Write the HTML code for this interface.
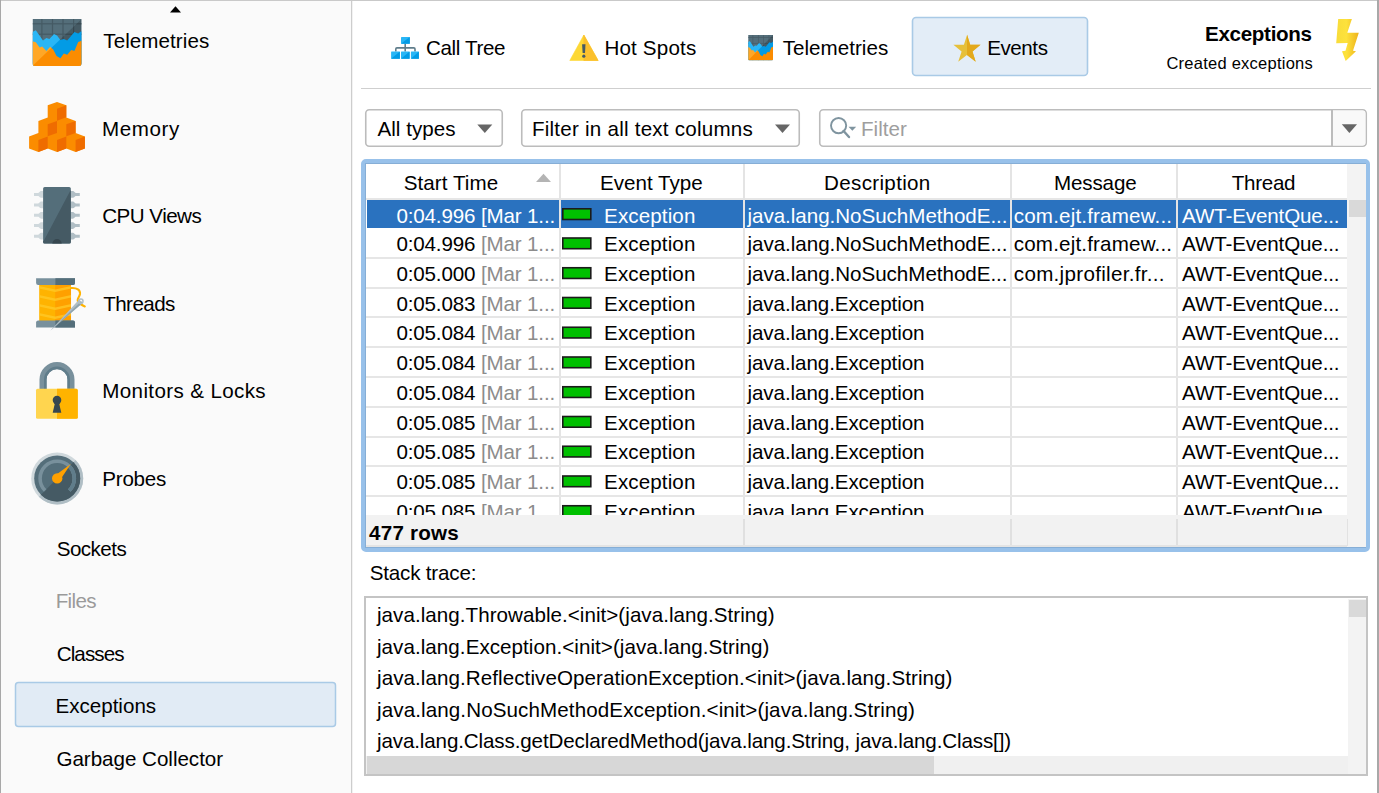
<!DOCTYPE html>
<html><head><meta charset="utf-8"><style>
html,body{margin:0;padding:0;width:1379px;height:793px;overflow:hidden;background:#fff}
.t{position:absolute;font-family:"Liberation Sans",sans-serif;line-height:1;white-space:nowrap}
svg{position:absolute;left:0;top:0}
</style></head><body>
<svg width="1379" height="793" viewBox="0 0 1379 793"><rect x="0" y="0" width="1379" height="793" fill="#fff" /><rect x="0" y="0" width="352" height="793" fill="#fafafa" /><rect x="351" y="0" width="1" height="793" fill="#cdcdcd" /><rect x="352" y="0" width="1" height="793" fill="#f2f2f2" /><rect x="0" y="0" width="1379" height="1" fill="#c9c9c9" /><rect x="0" y="0" width="1" height="793" fill="#a8a8a8" /><rect x="1377" y="0" width="2" height="793" fill="#a8a8a8" /><path d="M175.5 6.2 L181 12.6 L170 12.6 Z" fill="#000"/><rect x="15.5" y="682.5" width="320" height="44" rx="3" fill="#e1ebf5" stroke="#a9cae6" stroke-width="1.5"/><rect x="912.5" y="17.5" width="175" height="58" rx="3.5" fill="#e3edf7" stroke="#a9cae6" stroke-width="1.6"/><rect x="361" y="88" width="1010" height="1" fill="#cfcfcf" /><rect x="365.75" y="109.75" width="136.5" height="36.5" rx="3.5" fill="#fff" stroke="#bcbcbc" stroke-width="1.6"/><path d="M477.3 124.4 L492.3 124.4 L484.8 133 Z" fill="#666"/><rect x="521.75" y="109.75" width="277.5" height="36.5" rx="3.5" fill="#fff" stroke="#bcbcbc" stroke-width="1.6"/><path d="M775 124.4 L790 124.4 L782.5 133 Z" fill="#666"/><rect x="819.75" y="109.75" width="546.5" height="36.5" rx="3.5" fill="#fff" stroke="#bcbcbc" stroke-width="1.6"/><path d="M1332.5 110.6 H1362.5 Q1365.4 110.6 1365.4 113.5 V142.5 Q1365.4 145.4 1362.5 145.4 H1332.5 Z" fill="#f9f9f9"/><rect x="1331" y="110" width="2" height="36" fill="#bcbcbc" /><path d="M1341.8 124.2 L1357 124.2 L1349.4 133 Z" fill="#666"/><circle cx="838.6" cy="125.6" r="7.6" fill="none" stroke="#7f949f" stroke-width="1.9"/><path d="M843.6 131 L849 137" stroke="#7f949f" stroke-width="2.4" stroke-linecap="round"/><path d="M848.5 126.8 L856.2 126.8 L852.35 130.8 Z" fill="#7f949f"/><rect x="363" y="161" width="1005" height="389" rx="3" fill="none" stroke="#98c1ea" stroke-width="4"/><rect x="365.5" y="163.5" width="1000" height="384" fill="#fff" stroke="#86aed6" stroke-width="1"/><rect x="366" y="198" width="981" height="2" fill="#e6e6e6" /><rect x="559" y="164" width="2" height="351" fill="#e4e4e4" /><rect x="743" y="164" width="2" height="351" fill="#e4e4e4" /><rect x="1010" y="164" width="2" height="351" fill="#e4e4e4" /><rect x="1176" y="164" width="2" height="351" fill="#e4e4e4" /><rect x="1347" y="164" width="19" height="383" fill="#f3f3f3" /><rect x="1349" y="200" width="17" height="17" fill="#d9d9d9" /><rect x="367" y="200" width="192" height="28" fill="#2a72bf" /><rect x="561" y="200" width="182" height="28" fill="#2a72bf" /><rect x="745" y="200" width="265" height="28" fill="#2a72bf" /><rect x="1012" y="200" width="164" height="28" fill="#2a72bf" /><rect x="1178" y="200" width="169" height="28" fill="#2a72bf" /><rect x="366" y="257" width="981" height="2" fill="#e6e6e6" /><rect x="366" y="287" width="981" height="2" fill="#e6e6e6" /><rect x="366" y="316" width="981" height="2" fill="#e6e6e6" /><rect x="366" y="346" width="981" height="2" fill="#e6e6e6" /><rect x="366" y="376" width="981" height="2" fill="#e6e6e6" /><rect x="366" y="406" width="981" height="2" fill="#e6e6e6" /><rect x="366" y="436" width="981" height="2" fill="#e6e6e6" /><rect x="366" y="465" width="981" height="2" fill="#e6e6e6" /><rect x="366" y="495" width="981" height="2" fill="#e6e6e6" /><rect x="366" y="525" width="981" height="2" fill="#e6e6e6" /><rect x="562.8" y="208.80" width="28" height="10.7" fill="#00c000" stroke="#1b1b1b" stroke-width="1.6"/><rect x="562.8" y="238.00" width="28" height="10.7" fill="#00c000" stroke="#1b1b1b" stroke-width="1.6"/><rect x="562.8" y="267.75" width="28" height="10.7" fill="#00c000" stroke="#1b1b1b" stroke-width="1.6"/><rect x="562.8" y="297.50" width="28" height="10.7" fill="#00c000" stroke="#1b1b1b" stroke-width="1.6"/><rect x="562.8" y="327.25" width="28" height="10.7" fill="#00c000" stroke="#1b1b1b" stroke-width="1.6"/><rect x="562.8" y="357.00" width="28" height="10.7" fill="#00c000" stroke="#1b1b1b" stroke-width="1.6"/><rect x="562.8" y="386.75" width="28" height="10.7" fill="#00c000" stroke="#1b1b1b" stroke-width="1.6"/><rect x="562.8" y="416.50" width="28" height="10.7" fill="#00c000" stroke="#1b1b1b" stroke-width="1.6"/><rect x="562.8" y="446.25" width="28" height="10.7" fill="#00c000" stroke="#1b1b1b" stroke-width="1.6"/><rect x="562.8" y="476.00" width="28" height="10.7" fill="#00c000" stroke="#1b1b1b" stroke-width="1.6"/><rect x="562.8" y="505.75" width="28" height="10.7" fill="#00c000" stroke="#1b1b1b" stroke-width="1.6"/><path d="M543.5 173.8 L551 182 L536 182 Z" fill="#b4b4b4"/><rect x="366" y="515" width="981" height="32" fill="#f2f2f2" /><rect x="743" y="519" width="2" height="27" fill="#e0e0e0" /><rect x="1010" y="519" width="2" height="27" fill="#e0e0e0" /><rect x="1176" y="519" width="2" height="27" fill="#e0e0e0" /><rect x="366" y="545" width="981" height="2" fill="#e4e4e4" /><rect x="1347" y="515" width="19" height="32" fill="#f3f3f3" /><rect x="1347" y="519" width="1" height="27" fill="#e2e2e2" /><rect x="365" y="597" width="1002" height="178" fill="#fff" stroke="#c4c4c4" stroke-width="2"/><rect x="1348" y="599" width="18" height="175" fill="#f3f3f3" /><rect x="1349" y="600" width="17" height="17" fill="#d9d9d9" /><rect x="366" y="756" width="982" height="18" fill="#f0f0f0" /><rect x="367" y="756" width="567" height="18" fill="#d7d7d7" /><g transform="translate(32.4,19) scale(1,1)"><clipPath id="tca"><path d="M0 0H49.2V44Q49.2 47 46.2 47H3Q0 47 0 44Z"/></clipPath><mask id="tda" maskUnits="userSpaceOnUse" x="-5" y="-5" width="60" height="60"><polygon points="0,47 49.2,0 49.2,47" fill="#fff"/></mask><g clip-path="url(#tca)"><rect width="49.2" height="47" fill="#546e7a"/><rect x="8.9" y="0" width="1.2" height="47" fill="#455a64"/><rect x="19.5" y="0" width="1.2" height="47" fill="#455a64"/><rect x="30.0" y="0" width="1.2" height="47" fill="#455a64"/><rect x="40.6" y="0" width="1.2" height="47" fill="#455a64"/><rect x="0" y="4.2" width="49.2" height="1.2" fill="#455a64"/><rect x="0" y="14.6" width="49.2" height="1.2" fill="#455a64"/><polygon points="0.00,13.10 3.40,11.20 10.60,21.40 14.00,19.10 17.00,19.90 21.60,14.90 24.60,16.40 28.00,20.90 31.40,20.10 34.80,21.40 42.00,13.10 45.80,14.60 49.20,11.90 49.20,47.00 0.00,47.00" fill="#29b6f6"/><polygon points="0.00,22.20 3.40,23.30 7.20,28.60 9.80,27.50 14.00,32.00 17.80,27.80 20.80,30.50 24.20,36.90 28.00,39.20 31.40,34.60 34.80,35.80 38.90,30.90 42.00,32.00 45.80,22.90 49.20,21.80 49.20,47.00 0.00,47.00" fill="#ffa726"/><g mask="url(#tda)"><rect width="49.2" height="47" fill="#455a64"/><rect x="8.9" y="0" width="1.2" height="47" fill="#37474f"/><rect x="19.5" y="0" width="1.2" height="47" fill="#37474f"/><rect x="30.0" y="0" width="1.2" height="47" fill="#37474f"/><rect x="40.6" y="0" width="1.2" height="47" fill="#37474f"/><rect x="0" y="4.2" width="49.2" height="1.2" fill="#37474f"/><rect x="0" y="14.6" width="49.2" height="1.2" fill="#37474f"/><polygon points="0.00,13.10 3.40,11.20 10.60,21.40 14.00,19.10 17.00,19.90 21.60,14.90 24.60,16.40 28.00,20.90 31.40,20.10 34.80,21.40 42.00,13.10 45.80,14.60 49.20,11.90 49.20,47.00 0.00,47.00" fill="#039be5"/><polygon points="0.00,22.20 3.40,23.30 7.20,28.60 9.80,27.50 14.00,32.00 17.80,27.80 20.80,30.50 24.20,36.90 28.00,39.20 31.40,34.60 34.80,35.80 38.90,30.90 42.00,32.00 45.80,22.90 49.20,21.80 49.20,47.00 0.00,47.00" fill="#fb8c00"/></g></g></g><g transform="translate(29.1,101.9)"><polygon points="0.00,34.60 9.30,31.10 9.30,19.00 18.60,15.50 18.60,3.40 27.90,0.00 37.20,3.40 37.20,15.50 46.50,19.00 46.50,31.10 55.80,34.60 55.80,46.60 46.50,50.00 37.20,46.60 27.90,50.00 18.60,46.60 9.30,50.00 0.00,46.60" fill="#fb8c00"/><polygon points="27.90,6.80 37.20,3.40 37.20,15.40 27.90,18.80" fill="#ef6c00"/><polygon points="18.60,22.40 27.90,19.00 27.90,31.00 18.60,34.40" fill="#ef6c00"/><polygon points="37.20,22.40 46.50,19.00 46.50,31.00 37.20,34.40" fill="#ef6c00"/><polygon points="9.30,38.00 18.60,34.60 18.60,46.60 9.30,50.00" fill="#ef6c00"/><polygon points="27.90,38.00 37.20,34.60 37.20,46.60 27.90,50.00" fill="#ef6c00"/><polygon points="46.50,38.00 55.80,34.60 55.80,46.60 46.50,50.00" fill="#ef6c00"/></g><path d="M43.5 191.0 H41.2 C39.6 191.0 39.4 192.9 38.2 192.9 H34 V195.9 H38.2 C39.4 195.9 39.6 197.8 41.2 197.8 H43.5 Z" fill="#cfd8dc"/><path d="M70.5 191.0 H72.8 C74.4 191.0 74.6 192.9 75.8 192.9 H79.8 V195.9 H75.8 C74.6 195.9 74.4 197.8 72.8 197.8 H70.5 Z" fill="#b0bec5"/><path d="M43.5 201.5 H41.2 C39.6 201.5 39.4 203.4 38.2 203.4 H34 V206.4 H38.2 C39.4 206.4 39.6 208.3 41.2 208.3 H43.5 Z" fill="#cfd8dc"/><path d="M70.5 201.5 H72.8 C74.4 201.5 74.6 203.4 75.8 203.4 H79.8 V206.4 H75.8 C74.6 206.4 74.4 208.3 72.8 208.3 H70.5 Z" fill="#b0bec5"/><path d="M43.5 211.9 H41.2 C39.6 211.9 39.4 213.8 38.2 213.8 H34 V216.8 H38.2 C39.4 216.8 39.6 218.70000000000002 41.2 218.70000000000002 H43.5 Z" fill="#cfd8dc"/><path d="M70.5 211.9 H72.8 C74.4 211.9 74.6 213.8 75.8 213.8 H79.8 V216.8 H75.8 C74.6 216.8 74.4 218.70000000000002 72.8 218.70000000000002 H70.5 Z" fill="#b0bec5"/><path d="M43.5 222.2 H41.2 C39.6 222.2 39.4 224.1 38.2 224.1 H34 V227.1 H38.2 C39.4 227.1 39.6 229.0 41.2 229.0 H43.5 Z" fill="#cfd8dc"/><path d="M70.5 222.2 H72.8 C74.4 222.2 74.6 224.1 75.8 224.1 H79.8 V227.1 H75.8 C74.6 227.1 74.4 229.0 72.8 229.0 H70.5 Z" fill="#b0bec5"/><path d="M43.5 232.79999999999998 H41.2 C39.6 232.79999999999998 39.4 234.7 38.2 234.7 H34 V237.7 H38.2 C39.4 237.7 39.6 239.6 41.2 239.6 H43.5 Z" fill="#cfd8dc"/><path d="M70.5 232.79999999999998 H72.8 C74.4 232.79999999999998 74.6 234.7 75.8 234.7 H79.8 V237.7 H75.8 C74.6 237.7 74.4 239.6 72.8 239.6 H70.5 Z" fill="#b0bec5"/><clipPath id="cpuc"><rect x="43.1" y="187" width="27.7" height="56.6" rx="1.6"/></clipPath><g clip-path="url(#cpuc)"><rect x="43" y="187" width="29" height="57" fill="#546e7a"/><polygon points="43.7,241 70.8,189.7 72,189.7 72,245 43,245 43,241" fill="#455a64"/><circle cx="57" cy="243.8" r="4.7" fill="#37474f"/></g><clipPath id="spb"><rect x="39.2" y="284" width="31.9" height="37"/></clipPath><g clip-path="url(#spb)"><rect x="39" y="284" width="17" height="37" fill="#ffb300"/><rect x="55.2" y="284" width="16" height="37" fill="#ffa000"/><path d="M39 286 L55.2 289.5 L71.2 286 L71.2 288.6 L55.2 292.1 L39 288.6 Z" fill="#ffca28" opacity="0.75"/><path d="M39 295 L55.2 298.5 L71.2 295 L71.2 297.6 L55.2 301.1 L39 297.6 Z" fill="#ffca28" opacity="0.75"/><path d="M39 304 L55.2 307.5 L71.2 304 L71.2 306.6 L55.2 310.1 L39 306.6 Z" fill="#ffca28" opacity="0.75"/><path d="M39 313 L55.2 316.5 L71.2 313 L71.2 315.6 L55.2 319.1 L39 315.6 Z" fill="#ffca28" opacity="0.75"/></g><path d="M36.1 278.3 H75 V283 Q75 284.9 73 284.9 H38.1 Q36.1 284.9 36.1 283 Z" fill="#78909c"/><path d="M55.4 278.3 H75 V283 Q75 284.9 73 284.9 H55.4 Z" fill="#546e7a"/><path d="M38.1 320.5 H73 Q75 320.5 75 322.4 V327.4 H36.1 V322.4 Q36.1 320.5 38.1 320.5 Z" fill="#78909c"/><path d="M55.4 320.5 H73 Q75 320.5 75 322.4 V327.4 H55.4 Z" fill="#546e7a"/><path d="M71 288 C77 287.5 80.5 290 80 294 C79.5 297 76.5 299 78 301.5 C79.5 304 82.5 305.5 84.8 306.4" fill="none" stroke="#ffb300" stroke-width="2.1" stroke-linecap="round"/><path d="M50.2 330.8 L79.2 299.6 L82.6 302.9 Z" fill="#b0bec5"/><path d="M50.2 330.8 L82.6 302.9 L81.2 301.3 Z" fill="#90a4ae"/><circle cx="80.9" cy="301.2" r="2.1" fill="none" stroke="#b0bec5" stroke-width="1.5"/><path d="M43 389 V379.6 A14 14 0 0 1 71 379.6 V389" fill="none" stroke="#78909c" stroke-width="7"/><path d="M45.3 389 V379.6 A11.7 11.7 0 0 1 68.7 379.6 V389" fill="none" stroke="#607d8b" stroke-width="2.6"/><rect x="36" y="388.8" width="41.8" height="30" rx="1.6" fill="#ffd54f"/><path d="M57 388.8 H76.2 Q77.8 388.8 77.8 390.4 V417.2 Q77.8 418.8 76.2 418.8 H57 Z" fill="#ffb300"/><circle cx="57" cy="400.1" r="4.3" fill="#37474f"/><path d="M55.3 401.4 H58.7 L61.3 412.7 H52.7 Z" fill="#37474f"/><clipPath id="prd"><polygon points="17.200000000000003,518.4 97.2,438.4 97.2,518.4"/></clipPath><circle cx="57.2" cy="478.4" r="26" fill="#cfd8dc"/><circle cx="57.2" cy="478.4" r="26" fill="#b0bec5" clip-path="url(#prd)"/><circle cx="57.2" cy="478.4" r="23" fill="#546e7a"/><circle cx="57.2" cy="478.4" r="23" fill="#455a64" clip-path="url(#prd)"/><path d="M45.11 490.49 A17.1 17.1 0 1 1 69.29 490.49" fill="none" stroke="#78909c" stroke-width="3.6"/><path d="M45.11 490.49 A17.1 17.1 0 1 1 69.29 490.49" fill="none" stroke="#607d8b" stroke-width="3.6" clip-path="url(#prd)"/><path d="M54.800000000000004 475.79999999999995 L70.8 463.9 L59.800000000000004 480.59999999999997 Z" fill="#ffa000"/><circle cx="57.2" cy="478.4" r="5.2" fill="#ffa000"/><clipPath id="ctd"><polygon points="388,62 422,28 422,62"/></clipPath><path d="M405.2 43.8 V51.5 M395.8 51.5 V49 Q395.8 47.9 397 47.9 H413.8 Q415 47.9 415 49 V51.5" fill="none" stroke="#607d8b" stroke-width="1.6"/><rect x="401" y="37" width="8.8" height="6.8" rx="0.6" fill="#29b6f6"/><polygon points="401,43.8 409.8,37 409.8,43.8" fill="#039be5"/><rect x="391.1" y="51.5" width="8.8" height="7.3" rx="0.6" fill="#29b6f6"/><polygon points="391.1,58.8 399.90000000000003,51.5 399.90000000000003,58.8" fill="#039be5"/><rect x="401" y="51.5" width="8.6" height="7.3" rx="0.6" fill="#29b6f6"/><polygon points="401,58.8 409.6,51.5 409.6,58.8" fill="#039be5"/><rect x="410.9" y="51.5" width="8" height="7.3" rx="0.6" fill="#29b6f6"/><polygon points="410.9,58.8 418.9,51.5 418.9,58.8" fill="#039be5"/><path d="M583.8 35 L598.1 60.5 H569.8 Z" fill="#fdd835" stroke="#fdd835" stroke-width="0.6" stroke-linejoin="round"/><path d="M583.8 35 L598.1 60.5 H583.8 Z" fill="#fbc02d" stroke="#fbc02d" stroke-width="0.6" stroke-linejoin="round"/><path d="M582.1 44.3 H585.5 L585 53 H582.6 Z" fill="#455a64"/><circle cx="583.8" cy="56.2" r="1.6" fill="#455a64"/><g transform="translate(748.1,35) scale(0.5060975609756097,0.5446808510638298)"><clipPath id="tcb"><path d="M0 0H49.2V44Q49.2 47 46.2 47H3Q0 47 0 44Z"/></clipPath><mask id="tdb" maskUnits="userSpaceOnUse" x="-5" y="-5" width="60" height="60"><polygon points="0,47 49.2,0 49.2,47" fill="#fff"/></mask><g clip-path="url(#tcb)"><rect width="49.2" height="47" fill="#546e7a"/><rect x="8.9" y="0" width="1.2" height="47" fill="#455a64"/><rect x="19.5" y="0" width="1.2" height="47" fill="#455a64"/><rect x="30.0" y="0" width="1.2" height="47" fill="#455a64"/><rect x="40.6" y="0" width="1.2" height="47" fill="#455a64"/><rect x="0" y="4.2" width="49.2" height="1.2" fill="#455a64"/><rect x="0" y="14.6" width="49.2" height="1.2" fill="#455a64"/><polygon points="0.00,13.10 3.40,11.20 10.60,21.40 14.00,19.10 17.00,19.90 21.60,14.90 24.60,16.40 28.00,20.90 31.40,20.10 34.80,21.40 42.00,13.10 45.80,14.60 49.20,11.90 49.20,47.00 0.00,47.00" fill="#29b6f6"/><polygon points="0.00,22.20 3.40,23.30 7.20,28.60 9.80,27.50 14.00,32.00 17.80,27.80 20.80,30.50 24.20,36.90 28.00,39.20 31.40,34.60 34.80,35.80 38.90,30.90 42.00,32.00 45.80,22.90 49.20,21.80 49.20,47.00 0.00,47.00" fill="#ffa726"/><g mask="url(#tdb)"><rect width="49.2" height="47" fill="#455a64"/><rect x="8.9" y="0" width="1.2" height="47" fill="#37474f"/><rect x="19.5" y="0" width="1.2" height="47" fill="#37474f"/><rect x="30.0" y="0" width="1.2" height="47" fill="#37474f"/><rect x="40.6" y="0" width="1.2" height="47" fill="#37474f"/><rect x="0" y="4.2" width="49.2" height="1.2" fill="#37474f"/><rect x="0" y="14.6" width="49.2" height="1.2" fill="#37474f"/><polygon points="0.00,13.10 3.40,11.20 10.60,21.40 14.00,19.10 17.00,19.90 21.60,14.90 24.60,16.40 28.00,20.90 31.40,20.10 34.80,21.40 42.00,13.10 45.80,14.60 49.20,11.90 49.20,47.00 0.00,47.00" fill="#039be5"/><polygon points="0.00,22.20 3.40,23.30 7.20,28.60 9.80,27.50 14.00,32.00 17.80,27.80 20.80,30.50 24.20,36.90 28.00,39.20 31.40,34.60 34.80,35.80 38.90,30.90 42.00,32.00 45.80,22.90 49.20,21.80 49.20,47.00 0.00,47.00" fill="#fb8c00"/></g></g></g><polygon points="967.10,34.80 970.20,44.75 980.50,44.75 972.50,51.60 975.70,61.80 966.90,55.00 958.20,61.80 961.60,51.60 953.40,44.75 963.90,44.75" fill="#e6c03a"/><clipPath id="str"><rect x="967" y="30" width="20" height="35"/></clipPath><polygon points="967.10,34.80 970.20,44.75 980.50,44.75 972.50,51.60 975.70,61.80 966.90,55.00 958.20,61.80 961.60,51.60 953.40,44.75 963.90,44.75" fill="#e3a91c" clip-path="url(#str)"/><linearGradient id="lg" x1="0" y1="0" x2="1" y2="0"><stop offset="0" stop-color="#f8dc3a"/><stop offset="0.45" stop-color="#fde23c"/><stop offset="1" stop-color="#eeb21c"/></linearGradient><polygon points="1338.20,18.90 1351.90,18.90 1347.30,32.70 1358.80,32.70 1353.00,50.80 1356.00,51.20 1345.70,61.00 1342.00,51.20 1345.50,50.80 1347.70,43.00 1336.20,43.20" fill="url(#lg)"/></svg>
<div style="position:absolute;left:0;top:0;width:1379px;height:515px;overflow:hidden"><div class="t" style="left:396.40px;top:206.00px;font-size:20.6px;letter-spacing:-0.153px;color:#fff;font-weight:normal">0:04.996 <span style="color:#fff">[Mar 1...</span></div><div class="t" style="left:604.10px;top:206.00px;font-size:20.6px;letter-spacing:0.1px;color:#fff;font-weight:normal">Exception</div><div class="t" style="left:747.50px;top:206.00px;font-size:20.6px;letter-spacing:-0.04px;color:#fff;font-weight:normal">java.lang.NoSuchMethodE...</div><div class="t" style="left:1013.80px;top:206.00px;font-size:20.6px;letter-spacing:0.163px;color:#fff;font-weight:normal">com.ejt.framew...</div><div class="t" style="left:1182.10px;top:206.00px;font-size:20.6px;letter-spacing:-0.143px;color:#fff;font-weight:normal">AWT-EventQue...</div><div class="t" style="left:396.40px;top:234.06px;font-size:20.6px;letter-spacing:-0.153px;color:#000;font-weight:normal">0:04.996 <span style="color:#8c8c8c">[Mar 1...</span></div><div class="t" style="left:604.10px;top:234.06px;font-size:20.6px;letter-spacing:0.1px;color:#000;font-weight:normal">Exception</div><div class="t" style="left:747.50px;top:234.06px;font-size:20.6px;letter-spacing:-0.04px;color:#000;font-weight:normal">java.lang.NoSuchMethodE...</div><div class="t" style="left:1013.80px;top:234.06px;font-size:20.6px;letter-spacing:0.163px;color:#000;font-weight:normal">com.ejt.framew...</div><div class="t" style="left:1182.10px;top:234.06px;font-size:20.6px;letter-spacing:-0.143px;color:#000;font-weight:normal">AWT-EventQue...</div><div class="t" style="left:396.40px;top:263.81px;font-size:20.6px;letter-spacing:-0.153px;color:#000;font-weight:normal">0:05.000 <span style="color:#8c8c8c">[Mar 1...</span></div><div class="t" style="left:604.10px;top:263.81px;font-size:20.6px;letter-spacing:0.1px;color:#000;font-weight:normal">Exception</div><div class="t" style="left:747.50px;top:263.81px;font-size:20.6px;letter-spacing:-0.04px;color:#000;font-weight:normal">java.lang.NoSuchMethodE...</div><div class="t" style="left:1013.80px;top:263.81px;font-size:20.6px;letter-spacing:0.3px;color:#000;font-weight:normal">com.jprofiler.fr...</div><div class="t" style="left:1182.10px;top:263.81px;font-size:20.6px;letter-spacing:-0.143px;color:#000;font-weight:normal">AWT-EventQue...</div><div class="t" style="left:396.40px;top:293.56px;font-size:20.6px;letter-spacing:-0.153px;color:#000;font-weight:normal">0:05.083 <span style="color:#8c8c8c">[Mar 1...</span></div><div class="t" style="left:604.10px;top:293.56px;font-size:20.6px;letter-spacing:0.1px;color:#000;font-weight:normal">Exception</div><div class="t" style="left:747.50px;top:293.56px;font-size:20.6px;letter-spacing:-0.089px;color:#000;font-weight:normal">java.lang.Exception</div><div class="t" style="left:1182.10px;top:293.56px;font-size:20.6px;letter-spacing:-0.143px;color:#000;font-weight:normal">AWT-EventQue...</div><div class="t" style="left:396.40px;top:323.31px;font-size:20.6px;letter-spacing:-0.153px;color:#000;font-weight:normal">0:05.084 <span style="color:#8c8c8c">[Mar 1...</span></div><div class="t" style="left:604.10px;top:323.31px;font-size:20.6px;letter-spacing:0.1px;color:#000;font-weight:normal">Exception</div><div class="t" style="left:747.50px;top:323.31px;font-size:20.6px;letter-spacing:-0.089px;color:#000;font-weight:normal">java.lang.Exception</div><div class="t" style="left:1182.10px;top:323.31px;font-size:20.6px;letter-spacing:-0.143px;color:#000;font-weight:normal">AWT-EventQue...</div><div class="t" style="left:396.40px;top:353.06px;font-size:20.6px;letter-spacing:-0.153px;color:#000;font-weight:normal">0:05.084 <span style="color:#8c8c8c">[Mar 1...</span></div><div class="t" style="left:604.10px;top:353.06px;font-size:20.6px;letter-spacing:0.1px;color:#000;font-weight:normal">Exception</div><div class="t" style="left:747.50px;top:353.06px;font-size:20.6px;letter-spacing:-0.089px;color:#000;font-weight:normal">java.lang.Exception</div><div class="t" style="left:1182.10px;top:353.06px;font-size:20.6px;letter-spacing:-0.143px;color:#000;font-weight:normal">AWT-EventQue...</div><div class="t" style="left:396.40px;top:382.81px;font-size:20.6px;letter-spacing:-0.153px;color:#000;font-weight:normal">0:05.084 <span style="color:#8c8c8c">[Mar 1...</span></div><div class="t" style="left:604.10px;top:382.81px;font-size:20.6px;letter-spacing:0.1px;color:#000;font-weight:normal">Exception</div><div class="t" style="left:747.50px;top:382.81px;font-size:20.6px;letter-spacing:-0.089px;color:#000;font-weight:normal">java.lang.Exception</div><div class="t" style="left:1182.10px;top:382.81px;font-size:20.6px;letter-spacing:-0.143px;color:#000;font-weight:normal">AWT-EventQue...</div><div class="t" style="left:396.40px;top:412.56px;font-size:20.6px;letter-spacing:-0.153px;color:#000;font-weight:normal">0:05.085 <span style="color:#8c8c8c">[Mar 1...</span></div><div class="t" style="left:604.10px;top:412.56px;font-size:20.6px;letter-spacing:0.1px;color:#000;font-weight:normal">Exception</div><div class="t" style="left:747.50px;top:412.56px;font-size:20.6px;letter-spacing:-0.089px;color:#000;font-weight:normal">java.lang.Exception</div><div class="t" style="left:1182.10px;top:412.56px;font-size:20.6px;letter-spacing:-0.143px;color:#000;font-weight:normal">AWT-EventQue...</div><div class="t" style="left:396.40px;top:442.31px;font-size:20.6px;letter-spacing:-0.153px;color:#000;font-weight:normal">0:05.085 <span style="color:#8c8c8c">[Mar 1...</span></div><div class="t" style="left:604.10px;top:442.31px;font-size:20.6px;letter-spacing:0.1px;color:#000;font-weight:normal">Exception</div><div class="t" style="left:747.50px;top:442.31px;font-size:20.6px;letter-spacing:-0.089px;color:#000;font-weight:normal">java.lang.Exception</div><div class="t" style="left:1182.10px;top:442.31px;font-size:20.6px;letter-spacing:-0.143px;color:#000;font-weight:normal">AWT-EventQue...</div><div class="t" style="left:396.40px;top:472.06px;font-size:20.6px;letter-spacing:-0.153px;color:#000;font-weight:normal">0:05.085 <span style="color:#8c8c8c">[Mar 1...</span></div><div class="t" style="left:604.10px;top:472.06px;font-size:20.6px;letter-spacing:0.1px;color:#000;font-weight:normal">Exception</div><div class="t" style="left:747.50px;top:472.06px;font-size:20.6px;letter-spacing:-0.089px;color:#000;font-weight:normal">java.lang.Exception</div><div class="t" style="left:1182.10px;top:472.06px;font-size:20.6px;letter-spacing:-0.143px;color:#000;font-weight:normal">AWT-EventQue...</div><div class="t" style="left:396.40px;top:501.81px;font-size:20.6px;letter-spacing:-0.153px;color:#000;font-weight:normal">0:05.085 <span style="color:#8c8c8c">[Mar 1...</span></div><div class="t" style="left:604.10px;top:501.81px;font-size:20.6px;letter-spacing:0.1px;color:#000;font-weight:normal">Exception</div><div class="t" style="left:747.50px;top:501.81px;font-size:20.6px;letter-spacing:-0.089px;color:#000;font-weight:normal">java.lang.Exception</div><div class="t" style="left:1182.10px;top:501.81px;font-size:20.6px;letter-spacing:-0.143px;color:#000;font-weight:normal">AWT-EventQue...</div></div>
<div class="t" style="left:103.30px;top:31.00px;font-size:20.6px;letter-spacing:0.06px;color:#000;font-weight:normal">Telemetries</div><div class="t" style="left:102.10px;top:119.00px;font-size:20.6px;letter-spacing:0.56px;color:#000;font-weight:normal">Memory</div><div class="t" style="left:102.20px;top:206.00px;font-size:20.6px;letter-spacing:-0.525px;color:#000;font-weight:normal">CPU Views</div><div class="t" style="left:103.20px;top:294.00px;font-size:20.6px;letter-spacing:-0.566px;color:#000;font-weight:normal">Threads</div><div class="t" style="left:102.30px;top:381.00px;font-size:20.6px;letter-spacing:0.36px;color:#000;font-weight:normal">Monitors &amp; Locks</div><div class="t" style="left:102.30px;top:469.00px;font-size:20.6px;letter-spacing:-0.24px;color:#000;font-weight:normal">Probes</div><div class="t" style="left:56.70px;top:539.00px;font-size:20.6px;letter-spacing:-0.533px;color:#000;font-weight:normal">Sockets</div><div class="t" style="left:55.70px;top:591.00px;font-size:20.6px;letter-spacing:-0.65px;color:#9a9a9a;font-weight:normal">Files</div><div class="t" style="left:56.70px;top:644.00px;font-size:20.6px;letter-spacing:-0.9px;color:#000;font-weight:normal">Classes</div><div class="t" style="left:55.40px;top:696.00px;font-size:20.6px;letter-spacing:0.0px;color:#000;font-weight:normal">Exceptions</div><div class="t" style="left:56.40px;top:749.00px;font-size:20.6px;letter-spacing:-0.025px;color:#000;font-weight:normal">Garbage Collector</div><div class="t" style="left:425.90px;top:38.00px;font-size:20.6px;letter-spacing:-0.349px;color:#000;font-weight:normal">Call Tree</div><div class="t" style="left:604.40px;top:38.00px;font-size:20.6px;letter-spacing:0.176px;color:#000;font-weight:normal">Hot Spots</div><div class="t" style="left:782.70px;top:38.00px;font-size:20.6px;letter-spacing:0.02px;color:#000;font-weight:normal">Telemetries</div><div class="t" style="left:987.20px;top:38.00px;font-size:20.6px;letter-spacing:-0.44px;color:#000;font-weight:normal">Events</div><div class="t" style="left:1205.10px;top:23.66px;font-size:20.6px;letter-spacing:-0.333px;color:#000;font-weight:bold">Exceptions</div><div class="t" style="left:1166.40px;top:55.03px;font-size:16.5px;letter-spacing:0.247px;color:#000;font-weight:normal">Created exceptions</div><div class="t" style="left:377.40px;top:119.00px;font-size:20.6px;letter-spacing:0.051px;color:#000;font-weight:normal">All types</div><div class="t" style="left:531.90px;top:119.00px;font-size:20.6px;letter-spacing:0.232px;color:#000;font-weight:normal">Filter in all text columns</div><div class="t" style="left:861.00px;top:119.00px;font-size:20.6px;letter-spacing:0.04px;color:#9e9e9e;font-weight:normal">Filter</div><div class="t" style="left:403.70px;top:173.00px;font-size:20.6px;letter-spacing:0.066px;color:#000;font-weight:normal">Start Time</div><div class="t" style="left:600.00px;top:173.00px;font-size:20.6px;letter-spacing:-0.0px;color:#000;font-weight:normal">Event Type</div><div class="t" style="left:824.10px;top:173.00px;font-size:20.6px;letter-spacing:0.32px;color:#000;font-weight:normal">Description</div><div class="t" style="left:1053.90px;top:173.00px;font-size:20.6px;letter-spacing:-0.133px;color:#000;font-weight:normal">Message</div><div class="t" style="left:1231.70px;top:173.00px;font-size:20.6px;letter-spacing:-0.28px;color:#000;font-weight:normal">Thread</div><div class="t" style="left:369.10px;top:523.00px;font-size:20.6px;letter-spacing:0.2px;color:#000;font-weight:bold">477 rows</div><div class="t" style="left:369.70px;top:563.00px;font-size:20.6px;letter-spacing:-0.181px;color:#000;font-weight:normal">Stack trace:</div><div class="t" style="left:377.00px;top:605.00px;font-size:20.6px;letter-spacing:0.037px;color:#000;font-weight:normal">java.lang.Throwable.&lt;init&gt;(java.lang.String)</div><div class="t" style="left:377.00px;top:636.50px;font-size:20.6px;letter-spacing:0.047px;color:#000;font-weight:normal">java.lang.Exception.&lt;init&gt;(java.lang.String)</div><div class="t" style="left:377.00px;top:668.00px;font-size:20.6px;letter-spacing:0.068px;color:#000;font-weight:normal">java.lang.ReflectiveOperationException.&lt;init&gt;(java.lang.String)</div><div class="t" style="left:377.00px;top:699.50px;font-size:20.6px;letter-spacing:0.101px;color:#000;font-weight:normal">java.lang.NoSuchMethodException.&lt;init&gt;(java.lang.String)</div><div class="t" style="left:377.00px;top:731.00px;font-size:20.6px;letter-spacing:-0.133px;color:#000;font-weight:normal">java.lang.Class.getDeclaredMethod(java.lang.String, java.lang.Class[])</div>
</body></html>
